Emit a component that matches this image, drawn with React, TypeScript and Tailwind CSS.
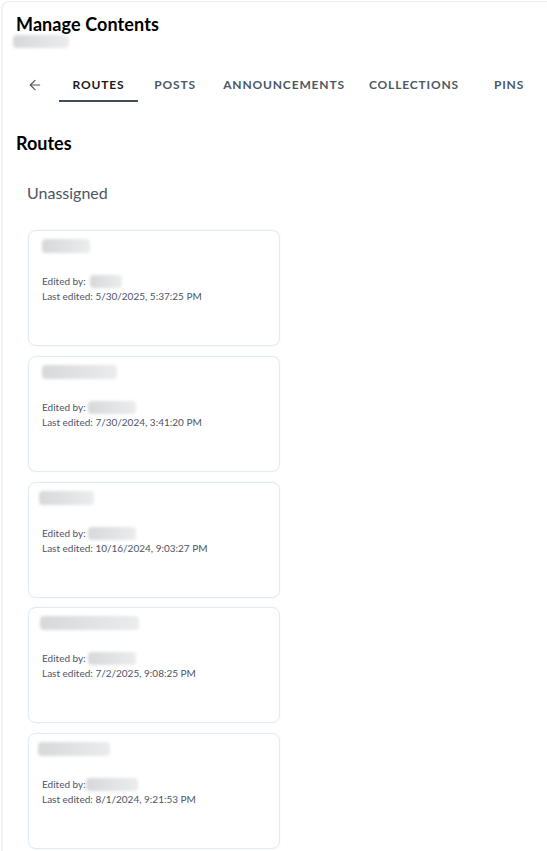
import { ArrowLeft } from "lucide-react";

const tabs = [
  { label: "ROUTES", w: "w-[79px]", active: true },
  { label: "POSTS", w: "w-[74px]" },
  { label: "ANNOUNCEMENTS", w: "w-[144px]" },
  { label: "COLLECTIONS", w: "w-[116px]" },
  { label: "PINS", w: "w-[74px]" },
];

const routes = [
  { title: "w-[48px]", titleX: "ml-0", by: "w-[32px]", byGap: "ml-[4px]", edited: "5/30/2025, 5:37:25 PM" },
  { title: "w-[75px]", titleX: "ml-0", by: "w-[48px]", byGap: "ml-[2px]", edited: "7/30/2024, 3:41:20 PM" },
  { title: "w-[55px]", titleX: "-ml-[3px]", by: "w-[48px]", byGap: "ml-[2px]", edited: "10/16/2024, 9:03:27 PM" },
  { title: "w-[99px]", titleX: "-ml-[2px]", by: "w-[48px]", byGap: "ml-[2px]", edited: "7/2/2025, 9:08:25 PM" },
  { title: "w-[72px]", titleX: "-ml-[4px]", by: "w-[52px]", byGap: "ml-0", edited: "8/1/2024, 9:21:53 PM" },
];

function Blur({ className }: { className: string }) {
  return (
    <span
      className={`rounded-sm bg-gradient-to-r from-[#d6d8da] via-[#e0e2e3] to-[#ebeced] blur-[1.5px] ${className}`}
    />
  );
}

export default function App() {
  return (
    <div className="min-h-[851px] bg-white font-['Lato',sans-serif] text-[#111]">
      <div className="ml-px mt-px min-h-[850px] rounded-tl-lg border-l-2 border-t border-[#eef2f7] pl-[13px] pt-[11px]">
        <h1 className="text-[18px] font-bold leading-[22px] tracking-[0.1px] text-black">
          Manage Contents
        </h1>
        <Blur className="-ml-[3px] block h-[13px] w-[56px]" />

        <div className="mt-[20px] flex h-[34px] items-stretch">
          <button className="flex w-[38px] items-center justify-center text-[#555]">
            <ArrowLeft size={16} strokeWidth={1.75} />
          </button>
          <div className="w-[5px]" />
          {tabs.map((t) => (
            <button
              key={t.label}
              className={`relative flex ${t.w} shrink-0 items-center justify-center text-[12px] font-bold tracking-[0.07em] ${
                t.active ? "text-[#1a1a1a]" : "text-[#4a5963]"
              }`}
            >
              {t.label}
              {t.active && (
                <span className="absolute bottom-0 left-0 right-0 h-[2px] bg-[#3d4e58]" />
              )}
            </button>
          ))}
        </div>

        <h2 className="mt-[30px] text-[18px] font-bold leading-[22px] text-black">Routes</h2>
        <h3 className="mt-[29px] ml-[11px] text-[16px] leading-[20px] text-[#4b5563]">
          Unassigned
        </h3>

        <div className="mt-[27px] ml-[12px] flex flex-col gap-[9.75px]">
          {routes.map((r, i) => (
            <div
              key={i}
              className="h-[116px] w-[252px] rounded-lg border border-[#e1eaf6] px-[13px] pt-[8px] shadow-[0_0_2px_rgba(200,215,235,0.35)]"
            >
              <Blur className={`block h-[14px] ${r.title} ${r.titleX}`} />
              <div className="mt-[21px] text-[10px] leading-[15px] text-[#4d5468]">
                <div className="flex items-center">
                  Edited by:<Blur className={`inline-block h-[13px] ${r.by} ${r.byGap}`} />
                </div>
                <div>Last edited: {r.edited}</div>
              </div>
            </div>
          ))}
        </div>
      </div>
    </div>
  );
}
